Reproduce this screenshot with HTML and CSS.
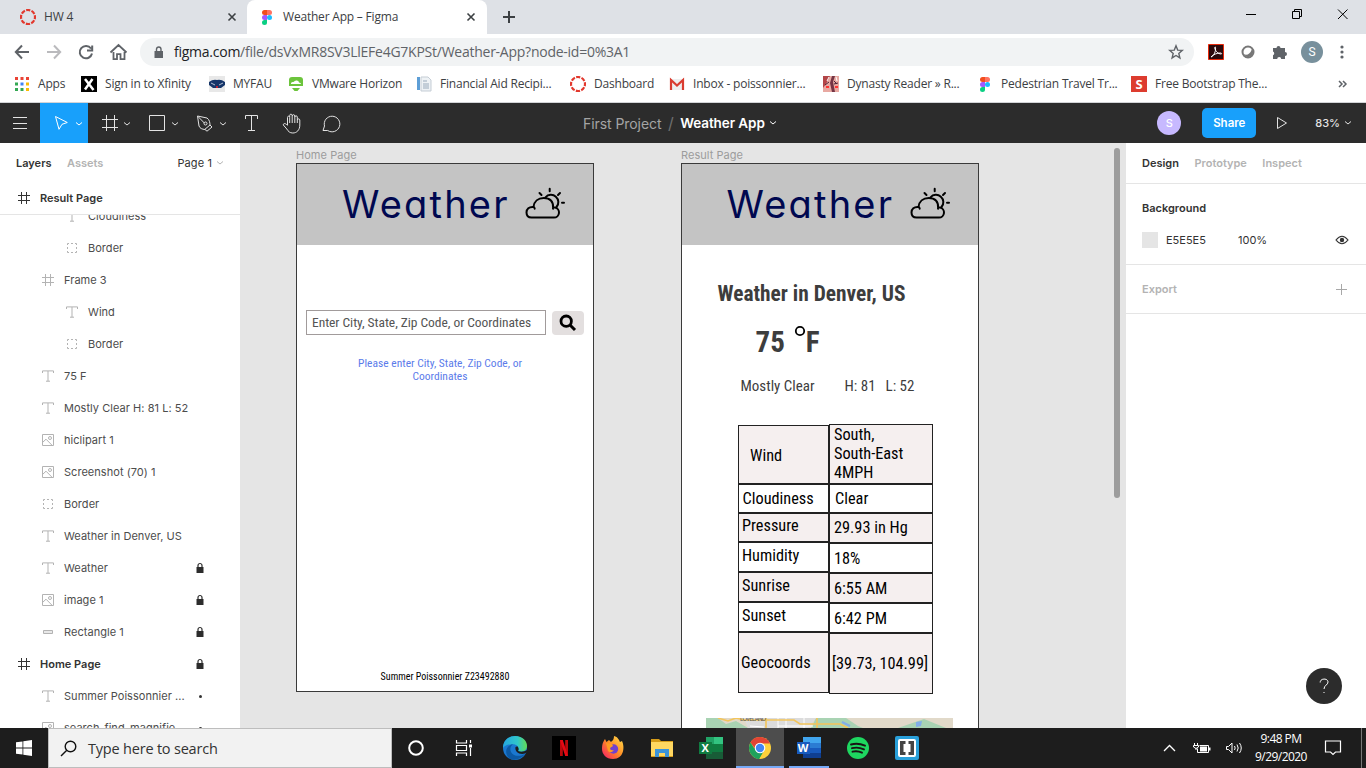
FILE: index.html
```html
<!DOCTYPE html>
<html lang="en">
<head>
<meta charset="utf-8">
<title>Weather App – Figma</title>
<link rel="stylesheet" href="styles.css">
</head>
<body>
<svg class="defs" width="0" height="0">
  <symbol id="i-text" viewBox="0 0 12 12"><path d="M.5 3V.9h11V3M6 1v10.2M4 11.2h4" fill="none" stroke="currentColor"/></symbol>
  <symbol id="i-frame" viewBox="0 0 12 12"><path d="M3.5 0v12M8.5 0v12M0 3.5h12M0 8.5h12" fill="none" stroke="currentColor"/></symbol>
  <symbol id="i-group" viewBox="0 0 12 12"><path d="M1.500 3V1.500H3M5 1.500h2M9 1.500h1.500V3M10.500 5v2M10.500 9v1.500H9M7 10.500H5M3 10.500H1.500V9M1.500 7V5" fill="none" stroke="currentColor"/></symbol>
  <symbol id="i-image" viewBox="0 0 12 12"><path d="M.5.5h11v11H.5zM.5 8.5L4 5.200l6 6" fill="none" stroke="currentColor"/><circle cx="8" cy="4" r="1.500" fill="none" stroke="currentColor"/></symbol>
  <symbol id="i-rect" viewBox="0 0 12 12"><path d="M1.500 4.500h9v3h-9z" fill="#e8e8e8" stroke="currentColor"/></symbol>
  <symbol id="i-lock" viewBox="0 0 8 12"><path d="M.5 5h7v6h-7z" fill="#2c2c2c"/><path d="M2 5.500V3.500a2 2 0 0 1 4 0v2" fill="none" stroke="#2c2c2c" stroke-width="1.200"/></symbol>
  <symbol id="i-figma" viewBox="0 0 10 15"><path d="M2.500 0H5v5H2.500a2.500 2.500 0 0 1 0-5z" fill="#f24e1e"/><path d="M5 0h2.500a2.500 2.500 0 0 1 0 5H5z" fill="#ff7262"/><path d="M2.500 5H5v5H2.500a2.500 2.500 0 0 1 0-5z" fill="#a259ff"/><circle cx="7.500" cy="7.500" r="2.500" fill="#1abcfe"/><path d="M2.500 10H5v2.500A2.500 2.500 0 1 1 2.500 10z" fill="#0acf83"/></symbol>
  <symbol id="i-canvas" viewBox="0 0 16 16"><circle cx="8" cy="8" r="7" fill="none" stroke="#e2382d" stroke-width="2.200" stroke-dasharray="4.200 1.298" stroke-dashoffset="2.100"/></symbol>
  <symbol id="i-x" viewBox="0 0 10 10"><path d="M1.500 1.500l7 7M8.500 1.500l-7 7" stroke="#3c4043" stroke-width="1.600"/></symbol>
  <symbol id="i-sun" viewBox="0 0 40 32"><g fill="none" stroke="#000" stroke-width="2" stroke-linecap="round"><path d="M6.500 30.500H29a5 5 0 0 0 1-9.900c-.7-.2-1.300-.1-1.900.1C28.500 14.500 25 11 18.800 11 13 11 9 14.500 8.500 20 4 19.500 1.500 22 1.500 25.500c0 3 2 5 5 5zM8.500 20q1 .3 1.200 1.700M28.100 19.500v2.200"/><path d="M20.500 10.300a6.900 6.900 0 1 1 11 9.700M24.700 1.800v2.400M35 6l-2 2M14.500 6l2 2M37 15.700h2"/></g></symbol>
</svg>

<div class="tabs">
  <div class="tab"><svg class="fav" width="16" height="16"><use href="#i-canvas"/></svg><span class="ui">HW 4</span><svg class="close" width="10" height="10"><use href="#i-x"/></svg></div>
  <div class="tab active"><svg class="fav" width="16" height="15"><use href="#i-figma"/></svg><span class="ui">Weather App – Figma</span><svg class="close" width="10" height="10"><use href="#i-x"/></svg></div>
  <svg class="plus" width="12" height="12"><path d="M6 0v12M0 6h12" stroke="#3c4043" stroke-width="2"/></svg>
  <svg class="winctl" width="126" height="20" fill="none" stroke="#000"><path d="M6 10.500h10M52.500 7.500h7v7h-7zM54.500 7.500v-2h7v7h-2M98 5.500l9.500 9.500M107.500 5.500L98 15"/></svg>
</div>

<div class="nav">
  <svg width="140" height="38" fill="none" stroke="#5f6368" stroke-width="2">
    <path d="M29 18H16.500M22 11.500L15.800 18l6.200 6.500"/>
    <path d="M47 18h12.500M54 11.500l6.200 6.500-6.200 6.500" stroke="#bababd"/>
    <path d="M91 14.500A6.200 6.200 0 1 0 92 19.500M92.200 11.500v5h-5.200"/>
    <path d="M113.500 18v7.200h3.500v-5h3.500v5h4V18M110.500 18.500l8-7.500 8 7.500" stroke-width="1.800"/>
  </svg>
  <div class="omni"><svg width="10" height="13"><path d="M.5 5h8.500v7H.5z" fill="#5f6368"/><path d="M2.500 5.500V3.200a2.200 2.200 0 0 1 4.500 0v2.300" fill="none" stroke="#5f6368" stroke-width="1.400"/></svg><span class="url"><b>figma.com</b>/file/dsVxMR8SV3LlEFe4G7KPSt/Weather-App?node-id=0%3A1</span>
    <svg class="star" width="16" height="16" fill="none" stroke="#5f6368" stroke-width="1.400"><path d="M8 1.800l1.700 4.300 4.600.3-3.500 3 1.100 4.500L8 11.500l-3.900 2.400 1.100-4.500-3.500-3 4.600-.3z"/></svg></div>
  <div class="ext">
    <svg width="16" height="16"><path d="M.5.5h15v15H.5z" fill="#2b0a0c" stroke="#e8290b"/><path d="M3 13c3-1 5-6 4.500-9.500 0-1-.9-.6-.7.500C7.200 7 10 10 13.200 10c.9-.3.300-1-.7-1C9 9 5 10.500 3 13z" fill="none" stroke="#fff"/></svg>
    <svg width="14" height="14"><circle cx="7" cy="7" r="5.500" fill="#fff" stroke="#777" stroke-width="2"/><path d="M2 9Q8 12 11 4l1.500 3-2 4-4 1.500z" fill="#777"/></svg>
    <svg width="16" height="16"><path d="M1 4h3.500a2 2 0 1 1 4 0H13v4a2 2 0 1 1 0 4v3H9.200a2 2 0 0 0-4 0H1v-3.800a2 2 0 0 0 0-3.700z" fill="#5f6368"/></svg>
    <span class="me">S</span>
    <svg width="4" height="14" fill="#5f6368"><circle cx="2" cy="2" r="1.600"/><circle cx="2" cy="7" r="1.600"/><circle cx="2" cy="12" r="1.600"/></svg>
  </div>
</div>

<div class="marks">
  <a><svg width="16" height="16"><g fill="#ea4335"><path d="M1 1h3v3H1zM6.500 1h3v3h-3zM12 1h3v3h-3z"/></g><path d="M1 6.500h3v3H1zM1 12h3v3H1z" fill="#34a853"/><path d="M6.500 6.500h3v3h-3z" fill="#4285f4"/><path d="M6.500 12h3v3h-3z" fill="#34a853"/><path d="M12 6.500h3v3h-3zM12 12h3v3h-3z" fill="#fbbc05"/></svg><span class="ui">Apps</span></a>
  <a><svg width="16" height="16"><path d="M0 0h16v16H0z"/><path d="M4 3l8.500 11M11.500 3L4 13.500" stroke="#fff" stroke-width="2.500"/></svg><span class="ui">Sign in to Xfinity</span></a>
  <a><svg width="16" height="16"><path d="M0 0h16v16H0z" fill="#e8e8e8"/><path d="M0 6q4-3 8-2 4-1 8 2v3l-4 3H4L0 9z" fill="#153569"/><path d="M2 7l4 2M14 7l-4 2" stroke="#b4bfd3"/><path d="M7 10h2v2H7z" fill="#b23"/></svg><span class="ui">MYFAU</span></a>
  <a><svg width="16" height="16"><path d="M4 1h8a3 3 0 0 1 3 3v6H1V4a3 3 0 0 1 3-3z" fill="#6cc43c"/><path d="M3 8V7q1-1.500 2.500-1Q7 4 9 4.500q2 .5 2 2 2 0 2 1.500z" fill="#fff"/><path d="M4 12h8l-2.500 3h-3z" fill="#6cc43c"/></svg><span class="ui">VMware Horizon</span></a>
  <a><svg width="16" height="16"><path d="M1 1h3v13H1z" fill="#5d9ed6"/><path d="M5 1h7l3 3v11H5z" fill="#eef2f5" stroke="#c5cdd5"/><path d="M7 5h4M7 8h6M7 10h6M7 12h6" stroke="#9ab"/></svg><span class="ui">Financial Aid Recipi...</span></a>
  <a><svg width="16" height="16"><use href="#i-canvas"/></svg><span class="ui">Dashboard</span></a>
  <a><svg width="16" height="16"><path d="M1 3h14v11H1z" fill="#eee"/><path d="M2 14V4l6 5.500L14 4v10" fill="none" stroke="#d93c30" stroke-width="2.200"/></svg><span class="ui">Inbox - poissonnier...</span></a>
  <a><svg width="16" height="16"><path d="M0 0h16v16H0z" fill="#e8a9a2"/><path d="M0 0h7L3 8l-3 4z" fill="#b34548"/><path d="M9 0h3l-2 6 2 10H9L7 7z" fill="#743444"/><path d="M2 9l4-3M11 5l3 3M11 8l4-1" stroke="#4b2337"/><path d="M3 11h3M12 11h3" stroke="#f33" stroke-width="2"/><path d="M6 1l-2 4M13 1l1 4" stroke="#fff"/></svg><span class="ui">Dynasty Reader » R...</span></a>
  <a><svg width="10" height="15"><use href="#i-figma"/></svg><span class="ui wide">Pedestrian Travel Tr...</span></a>
  <a><span class="sg">S</span><span class="ui">Free Bootstrap The...</span></a>
  <svg class="more" width="10" height="8" fill="none" stroke="#5f6368" stroke-width="1.500"><path d="M1 1l3 3-3 3M5 1l3 3-3 3"/></svg>
</div>

<div class="bar">
  <svg width="352" height="40" fill="none" stroke="#e3e3e3">
    <path d="M13 14.500h14M13 20.500h14M13 25.500h14"/>
    <path d="M40 0h48v40H40z" fill="#18a0fb" stroke="none"/>
    <path d="M55.500 13.500l11.800 6-5.300 1.800-3 5z" stroke="#fff"/>
    <path d="M76 19.500l3 2.500 3-2.500" stroke="#fff"/>
    <path d="M106.500 12v16M114.500 12v16M102 16.500h16M102 24.500h16M124 19.500l3 2.500 3-2.500"/>
    <path d="M149.500 12.500h15v15h-15zM172 19.500l3 2.500 3-2.500"/>
    <path d="M197.500 13l9.500 2c2.500 1.500 3 5 3 7l2 2-5 4.200-2-1.700c-3-.3-5-1-6-3.500zM198 13.500l6.500 6.700M205 26.200l5-4.200"/><circle cx="205.500" cy="20.500" r="1.500"/><path d="M220 19.500l3 2.500 3-2.500"/>
    <path d="M245.500 16v-3.500h12V16M251.500 13v14.500M248 27.500h7"/>
    <path d="M287.500 22v-7.500c0-1.800 2.200-1.800 2.200 0V20M289.700 14v-1.500c0-1.800 2.500-1.800 2.500 0V20M292.200 13c0-1.800 2.600-1.800 2.600 0v7M294.800 14c0-1.600 2.500-1.600 2.500 0v6M297.300 17c0-1.500 2.500-1.500 2.500 0v5c0 5-3 8-7 8-3 0-4.500-1.500-6-4l-3.500-4c0-2.200 2.500-1.800 4.200.5"/>
    <path d="M323 27.500l1.500-4.500a7.800 7.800 0 1 1 3.200 4.500z"/>
  </svg>
  <div class="crumb"><span>First Project</span><i>/</i><b>Weather App</b><svg width="8" height="6" fill="none" stroke="#fff"><path d="M1 1.500l3 2.500 3-2.500"/></svg></div>
  <div class="right"><span class="av">S</span><span class="share">Share</span><svg width="12" height="14" fill="none" stroke="#e3e3e3"><path d="M1.500 1.500l9 5.500-9 5.500z"/></svg><span class="pct">83%</span><svg width="8" height="6" fill="none" stroke="#e3e3e3"><path d="M1 1.500l3 2.500 3-2.500"/></svg></div>
</div>

<main>
  <aside class="layers">
    <div class="lt"><b>Layers</b><b class="dim">Assets</b><span class="pg">Page 1</span><svg width="8" height="6" fill="none" stroke="#b3b3b3"><path d="M1 1.500l3 2.500 3-2.500"/></svg></div>
    <div class="row top pin"><svg width="12" height="12"><use href="#i-frame"/></svg><span>Result Page</span></div>
    <div class="list">
      <div class="row l2"><svg width="12" height="12"><use href="#i-text"/></svg><span>Cloudiness</span></div>
      <div class="row l2"><svg width="12" height="12"><use href="#i-group"/></svg><span>Border</span></div>
      <div class="row"><svg width="12" height="12"><use href="#i-frame"/></svg><span>Frame 3</span></div>
      <div class="row l2"><svg width="12" height="12"><use href="#i-text"/></svg><span>Wind</span></div>
      <div class="row l2"><svg width="12" height="12"><use href="#i-group"/></svg><span>Border</span></div>
      <div class="row"><svg width="12" height="12"><use href="#i-text"/></svg><span>75 F</span></div>
      <div class="row"><svg width="12" height="12"><use href="#i-text"/></svg><span>Mostly Clear H: 81 L: 52</span></div>
      <div class="row"><svg width="12" height="12"><use href="#i-image"/></svg><span>hiclipart 1</span></div>
      <div class="row"><svg width="12" height="12"><use href="#i-image"/></svg><span>Screenshot (70) 1</span></div>
      <div class="row"><svg width="12" height="12"><use href="#i-group"/></svg><span>Border</span></div>
      <div class="row"><svg width="12" height="12"><use href="#i-text"/></svg><span>Weather in Denver, US</span></div>
      <div class="row"><svg width="12" height="12"><use href="#i-text"/></svg><span>Weather</span><svg class="lock" width="8" height="12"><use href="#i-lock"/></svg></div>
      <div class="row"><svg width="12" height="12"><use href="#i-image"/></svg><span>image 1</span><svg class="lock" width="8" height="12"><use href="#i-lock"/></svg></div>
      <div class="row"><svg width="12" height="12"><use href="#i-rect"/></svg><span>Rectangle 1</span><svg class="lock" width="8" height="12"><use href="#i-lock"/></svg></div>
      <div class="row top"><svg width="12" height="12"><use href="#i-frame"/></svg><span>Home Page</span><svg class="lock" width="8" height="12"><use href="#i-lock"/></svg></div>
      <div class="row"><svg width="12" height="12"><use href="#i-text"/></svg><span>Summer Poissonnier ...</span><em class="dot"></em></div>
      <div class="row"><svg width="12" height="12"><use href="#i-image"/></svg><span>search_find_magnifie...</span><em class="dot"></em></div>
    </div>
  </aside>

  <section class="canvas">
    <div class="name n1">Home Page</div>
    <div class="board b1">
      <div class="hero"><span>Weather</span><svg width="40" height="32"><use href="#i-sun"/></svg></div>
      <div class="find"><div class="field">Enter City, State, Zip Code, or Coordinates</div><div class="go"><svg width="18" height="18" fill="none" stroke="#000"><circle cx="7.200" cy="7.200" r="5.200" stroke-width="2.800"/><path d="M11 11l5 5" stroke-width="3"/></svg></div></div>
      <div class="hint">Please enter City, State, Zip Code, or<br>Coordinates</div>
      <div class="foot">Summer Poissonnier Z23492880</div>
    </div>
    <div class="name n2">Result Page</div>
    <div class="board b2">
      <div class="hero"><span>Weather</span><svg width="40" height="32"><use href="#i-sun"/></svg></div>
      <div class="place">Weather in Denver, US</div>
      <div class="temp"><span>75</span><svg width="12" height="12"><circle cx="6" cy="6" r="4.200" fill="none" stroke="#000" stroke-width="1.800"/></svg><span>F</span></div>
      <div class="sky"><span>Mostly Clear</span><span>H: 81</span><span>L: 52</span></div>
      <div class="grid">
        <div class="col a"><p class="h1 s">Wind</p><p class="h2">Cloudiness</p><p class="h3 s">Pressure</p><p class="h4">Humidity</p><p class="h5 s">Sunrise</p><p class="h6">Sunset</p><p class="h7 s">Geocoords</p></div>
        <div class="col z"><p class="h1 s">South,<br>South-East<br>4MPH</p><p class="h2">Clear</p><p class="h3 s">29.93 in Hg</p><p class="h4">18%</p><p class="h5 s">6:55 AM</p><p class="h6">6:42 PM</p><p class="h7 s">[39.73, 104.99]</p></div>
      </div>
      <svg class="map" width="247" height="20" fill="none"><path d="M0 0h247v20H0z" fill="#e1d9c9"/><path d="M0 0h12l8 6 10-3 12 7H0zM128 0h12l12 8 30 12h-60zM105 10l5-10h18v10z" fill="#a9d3b3"/><path d="M38 0h72l-8 10H42z" fill="#dcdcdc"/><path d="M192 10l26-9 22 9z" fill="#a9d3b3"/><path d="M210 4l6-1-1 5-5 1z" fill="#82ade9"/><path d="M136 4l8 4" stroke="#82ade9" stroke-width="2"/><path d="M44 8l14 1M72 0v10M80 0v10M98 0v10M72 8h35" stroke="#fff"/><path d="M12 0l10 3 8-3 8 2h50l6 4h40l8 4M60 0v10M111 0v10" stroke="#f3c55b" stroke-width="1.600"/><text x="34" y="2.500" font-size="6" font-family="Inter, sans-serif" fill="#555" textLength="26">LOVELAND</text></svg>
    </div>
    <div class="thumb"></div>
  </section>

  <aside class="props">
    <div class="pt"><b>Design</b><b class="dim">Prototype</b><b class="dim">Inspect</b></div>
    <div class="bgp"><b>Background</b><div class="bgr"><i></i><span class="hex">E5E5E5</span><span>100%</span><svg width="14" height="10"><path d="M1 5Q7-2.500 13 5 7 12.500 1 5z" fill="none" stroke="#333" stroke-width="1.200"/><circle cx="7" cy="5" r="2.200" fill="#333"/></svg></div></div>
    <div class="exp"><b class="dim">Export</b><svg width="11" height="11"><path d="M5.500 0v11M0 5.500h11" stroke="#a8a8a8"/></svg></div>
    <div class="help"><svg width="10" height="16" fill="none" stroke="#fff"><path d="M1.200 4.500C1 0 9 0 9 4c0 3-4 3.200-4 7"/><path d="M4.500 14.500h1"/></svg></div>
  </aside>
</main>

<footer>
  <div class="start"><svg width="16" height="16" fill="#fff"><path d="M0 2.300L6.500 1.400v6.200H0zM7.300 1.300L16 0v7.600H7.300zM0 8.400h6.500v6.200L0 13.700zM7.300 8.400H16V16l-8.700-1.300z"/></svg></div>
  <div class="search"><svg width="17" height="17" fill="none" stroke="#111" stroke-width="1.400"><circle cx="10.500" cy="6.500" r="5.300"/><path d="M6.800 10.200L1 16"/></svg><span>Type here to search</span></div>
  <div class="apps">
    <span><svg width="24" height="24"><circle cx="12" cy="12" r="6.800" fill="none" stroke="#fff" stroke-width="2"/></svg></span>
    <span><svg width="24" height="24" fill="none" stroke="#fff" stroke-width="1.200"><path d="M4.500 4v3h10V4M4.500 20v-3h10v3M4.500 9.500h10v5h-10zM18.500 4v3M18.500 12v8"/><path d="M17 8.500h3v3h-3z" fill="#fff" stroke="none"/></svg></span>
    <span><svg width="24" height="24"><defs><linearGradient id="eg" x1="0" x2="1"><stop offset="0" stop-color="#25a6df"/><stop offset=".6" stop-color="#30c6ca"/><stop offset="1" stop-color="#62dc55"/></linearGradient></defs><circle cx="12" cy="12" r="12" fill="#1b78d0"/><path d="M0 12C0 4 6 0 12 0c8 0 12 5.500 12 10 0 5-5 6.500-9 5.200 2-3-.5-7-5-7C5 8 1 10 0 12z" fill="url(#eg)"/><path d="M10 8c-7 6 1 16 12 10-5 7-14 7-17 3s-3-11 5-13z" fill="#0c59a4"/><path d="M12.500 11c-1 5 4 8 9.500 6.500l2-1.500v-2c-3 2-6 2-9 1 1-1 .8-3.500-.7-4.800z" fill="#1d1d1d"/></svg></span>
    <span><svg width="24" height="24"><path d="M0 0h24v24H0z"/><path d="M8 4h2.800v16H8zM13.200 4H16v16h-2.800z" fill="#b9090b"/><path d="M8 4h2.800L16 20h-2.800z" fill="#e50914"/></svg></span>
    <span><svg width="24" height="24"><defs><linearGradient id="ff" x1="1" y1="0" x2="0" y2="1"><stop offset="0" stop-color="#ffe44d"/><stop offset=".5" stop-color="#ff8a25"/><stop offset="1" stop-color="#f5156c"/></linearGradient></defs><path d="M1 13C1 8 2 6 4 3l1.500 3L8 4l2 2c1-1 3-2 3-6 4 1 5 4 6 6l2-1c3 6 2 18-9 18C5 23 1 18 1 13z" fill="url(#ff)"/><circle cx="12.500" cy="13" r="4.700" fill="#7141cf"/><path d="M5 7l6 1 1 2-3 2q0 3 4 2-3 4-6 1z" fill="#ff9d22"/></svg></span>
    <span><svg width="24" height="24"><path d="M1 3h8l2 2h12v16H1z" fill="#d69c19"/><path d="M1 6h22v14H1z" fill="#ffd761"/><path d="M5 21v-8h14v8h-4v-4H9v4z" fill="#3b94d9"/></svg></span>
    <span><svg width="24" height="24"><path d="M7 1h8v7H7z" fill="#21a366"/><path d="M15 1h9v7h-9z" fill="#33c481"/><path d="M7 8h17v8H7z" fill="#107c41"/><path d="M7 16h17v7H7z" fill="#185c37"/><path d="M0 6h13v12H0z" fill="#107c41"/><text x="2.500" y="16" font-family="Open Sans, sans-serif" font-weight="700" font-size="11" fill="#fff">X</text></svg></span>
    <span class="on"><svg width="24" height="24"><circle cx="12" cy="12" r="11" fill="#fdd03b"/><path d="M12 12H2.500A11 11 0 0 0 11 23l5.500-9z" fill="#1fa15c"/><path d="M2.500 6.500a11 11 0 0 1 19.500 1H12L8 14z" fill="#e24435"/><path d="M2.500 6.500A11 11 0 0 0 11 23l3-6-6-2z" fill="#1fa15c"/><circle cx="12" cy="12" r="5.300" fill="#fff"/><circle cx="12" cy="12" r="4.200" fill="#4285f4"/></svg></span>
    <span class="open"><svg width="24" height="24"><path d="M6 1h18v6H6z" fill="#41a5ee"/><path d="M6 7h18v5H6z" fill="#2b7cd3"/><path d="M6 12h18v5H6z" fill="#185abd"/><path d="M6 17h18v5H6z" fill="#103f91"/><path d="M0 6h13v12H0z" fill="#185abd"/><text x=".8" y="16" font-family="Open Sans, sans-serif" font-weight="700" font-size="11" fill="#fff">W</text></svg></span>
    <span><svg width="24" height="24"><circle cx="12" cy="12" r="11" fill="#1ed760"/><path d="M5 8.500q7-2 14 1.200M6 12.200q6-1.600 12 1.200M6.500 15.700q5-1.200 9.500 1" fill="none" stroke="#191414" stroke-width="1.900" stroke-linecap="round"/></svg></span>
    <span><svg width="24" height="24"><rect width="24" height="24" rx="2" fill="#29a0da"/><rect x="3" y="3" width="18" height="18" rx="2" fill="#fff"/><path d="M10.500 5H5v14h5.500v-3H8.500V8h2zM13.500 5H19v14h-5.500v-3h2V8h-2z" fill="#444"/></svg></span>
  </div>
  <div class="tray">
    <svg width="86" height="24" fill="none" stroke="#fff"><path d="M1 15l5.500-5.500L12 15" stroke-width="1.300"/><path d="M36.500 9.500h9v7h-11v-4"/><path d="M37 10.500h7v5h-7zM46 11.500h1.500v3H46z" fill="#fff" stroke="none"/><path d="M31.500 7v2M34.500 7v2M30.500 9.500h5v1.500q-2.500 3-5 0zM33 12v2"/><path d="M63.500 10.500h2l3.500-3.500v10l-3.500-3.500h-2zM71.500 10q1.300 2 0 4M74 8.500q2.400 3.500 0 7M76.500 7q3.500 5 0 10"/></svg>
    <div class="clock"><span>9:48 PM</span><span>9/29/2020</span></div>
    <svg class="note" width="18" height="18" fill="none" stroke="#fff" stroke-width="1.200"><path d="M1.500 2h15v11h-5L9 15.500 6.500 13h-5z"/></svg>
    <i class="edge"></i>
  </div>
</footer>
</body>
</html>
```
FILE: styles.css
```css
* { box-sizing: border-box; }
body { margin: 0; width: 1366px; height: 768px; overflow: hidden; display: flex; flex-direction: column; background: #fff; font-family: Inter, "Liberation Sans", sans-serif; font-size: 11px; color: #333; }
svg { display: block; flex: none; }
.defs { position: absolute; }
b { font-weight: 600; }
.ui { font: 12px/16px "Open Sans", "Noto Sans", sans-serif; letter-spacing: -.2px; color: #3c4043; white-space: nowrap; }

.tabs { height: 34px; flex: none; background: #dee1e6; display: flex; align-items: center; position: relative; }
.tab { width: 247px; height: 34px; display: flex; align-items: center; padding: 0 10px 0 20px; gap: 8px; }
.tab .close { margin-left: auto; }
.tab.active { width: 240px; padding-left: 12px; gap: 8px; padding-right: 11px; background: #fff; border-radius: 8px 8px 0 0; }
.plus { margin-left: 16px; }
.winctl { margin-left: auto; margin-bottom: 6px; }

.nav { height: 38px; flex: none; display: flex; align-items: flex-start; }
.omni { margin-top: 4px; width: 1054px; height: 28px; border-radius: 14px; background: #f1f3f4; display: flex; align-items: center; padding: 0 10px 0 14px; gap: 10px; }
.url { font: 14px/20px "Open Sans", "Noto Sans", sans-serif; letter-spacing: -.25px; color: #5f6368; white-space: nowrap; }
.url b { font-weight: 400; color: #202124; }
.star { margin-left: auto; }
.ext { display: flex; align-items: center; height: 36px; margin-left: 14px; gap: 17px; }
.me { width: 22px; height: 22px; border-radius: 50%; background: #78909c; color: #fff; font: 12px/22px Roboto, sans-serif; text-align: center; margin-left: -4px; }

.marks { height: 31px; flex: none; border-bottom: 1px solid #d2d4d7; padding: 0 0 6px 14px; display: grid; grid-template-columns: 67px 128px 79px 128px 154px 99px 154px 157px 151px 207px 20px; align-items: center; }
.marks a { display: flex; align-items: center; gap: 8px; }
.sg { width: 16px; height: 16px; background: #dd3c2f; color: #fff; font: 700 13px/16px "Open Sans", sans-serif; text-align: center; }
.wide { margin-left: 3px; }

.bar { height: 40px; flex: none; background: #2c2c2c; display: flex; color: #fff; }
.crumb { display: flex; align-items: center; margin-left: 231px; font-size: 14px; letter-spacing: -.07px; white-space: nowrap; }
.crumb span { color: #a4a4a4; }
.crumb i { font-style: normal; color: #6f6f6f; margin: 0 6.500px; font-size: 16px; }
.crumb b { font-size: 13.500px; }
.crumb svg { margin-left: 4px; }
.right { display: flex; align-items: center; margin-left: auto; padding-right: 14px; }
.av { width: 24px; height: 24px; border-radius: 50%; background: #c7b9ff; font: 500 11px/24px Inter; text-align: center; margin-right: 21px; }
.share { width: 54px; height: 30px; border-radius: 5px; background: #18a0fb; font-weight: 600; font-size: 11.500px; line-height: 30px; text-align: center; margin-right: 20px; }
.pct { margin-left: 27px; margin-right: 4px; font-size: 11px; font-weight: 500; color: #e3e3e3; }

main { flex: 1; min-height: 0; display: flex; }
.layers { width: 240px; background: #fff; display: flex; flex-direction: column; }
.dim { color: #b3b3b3; }
.lt { height: 39px; flex: none; display: flex; align-items: center; padding: 2px 16px; gap: 15.500px; }
.lt .pg { margin-left: auto; margin-right: -11.500px; letter-spacing: .1px; }
.row { height: 32px; flex: none; display: flex; align-items: center; padding-left: 42px; gap: 10px; color: #b3b3b3; }
.row span { color: #4c4c4c; letter-spacing: .04px; white-space: nowrap; }
.row.l2 { padding-left: 66px; }
.row.top { padding-left: 18px; color: #333; }
.row.top span { font-weight: 600; color: #333; letter-spacing: 0; }
.row.pin { height: 33px; border-bottom: 1px solid #e5e5e5; }
.lock { margin-left: auto; margin-right: 36px; }
.dot { width: 3px; height: 3px; border-radius: 50%; background: #333; margin-left: auto; margin-right: 38px; }
.list { flex: 1; min-height: 0; overflow: hidden; display: flex; flex-direction: column; }
.list .row:first-child { margin-top: -15px; }

.canvas { width: 886px; background: #e5e5e5; position: relative; overflow: hidden; }
.name { position: absolute; top: 5px; color: #9c9c9c; line-height: 14px; letter-spacing: .05px; }
.n1 { left: 56px; }
.n2 { left: 441px; }
.board { position: absolute; top: 20px; width: 298px; background: #fff; border: 1px solid #3a3a3a; font-family: Roboto, sans-serif; font-stretch: 75%; }
.b1 { left: 56px; height: 529px; }
.b2 { left: 440.500px; height: 700px; }
.hero { height: 81px; background: #c4c4c4; display: flex; align-items: center; padding-left: 45px; }
.hero span { width: 183px; font: 400 38px/79px Inter, sans-serif; font-feature-settings: "cv11"; letter-spacing: 2.200px; color: #000850; }
.hero svg { margin-top: -4px; }
.find { display: flex; margin: 65px 9px 0; justify-content: space-between; }
.field { width: 240px; height: 25px; border: 1px solid #a19b9b; padding-left: 5px; font-size: 13.500px; line-height: 22px; letter-spacing: -.05px; color: #555; white-space: nowrap; }
.go { width: 32px; height: 24px; border-radius: 4px; background: #e3dfdf; margin-top: 1px; padding: 3px 0 0 7px; }
.hint { margin-top: 22px; padding-right: 10px; text-align: center; font-size: 11.500px; line-height: 13px; color: #5b7bea; }
.foot { margin-top: 288px; text-align: center; font-size: 10px; line-height: 12px; color: #000; }
.place { margin: 36px 0 0 36px; font-size: 21.400px; line-height: 26px; font-weight: 700; color: #3d3d3d; }
.temp { display: flex; margin: 17px 0 0 74px; font-size: 29px; line-height: 36px; font-weight: 700; color: #3d3d3d; }
.temp svg { margin: 1px 0 0 9px; }
.sky { display: flex; margin-top: 16px; padding-left: 59px; font-size: 15px; line-height: 20px; color: #3d3d3d; }
.sky span:nth-child(1) { width: 104px; }
.sky span:nth-child(2) { width: 41px; }
.grid { display: flex; margin: 28px 0 0 56.500px; width: 195px; color: #000; font-size: 16.300px; }
.col { display: flex; flex-direction: column; width: 91px; padding-top: 1px; }
.col.z { width: 104px; padding-top: 0; }
.col p { margin: 0; border: 1px solid #222; line-height: 19px; padding: 3px; height: 30px; white-space: nowrap; }
.col .s { background: #f5efef; }
.a .h1 { height: 59px; padding: 20px 11px; }
.z .h1 { height: 60px; padding: 0 4px; }
.col .h2 { height: 29px; padding: 3.500px; }
.z .h2 { padding: 4px 5px; }
.a .h3 { height: 29px; padding: 2px 3px; }
.z .h3 { height: 30px; padding: 4px 4px; }
.a .h5, .a .h6, .a .h4 { padding: 3px; }
.z .h4, .z .h5, .z .h6 { padding: 5px 4px; }
.col .h7 { height: 61px; padding: 20px 2px; }
.map { margin: 24px 0 0 24px; }
.thumb { position: absolute; right: 6px; top: 5px; width: 6px; height: 350px; border-radius: 3px; background: #9d9d9d; }

.props { width: 240px; background: #fff; position: relative; }
.pt { height: 41px; border-bottom: 1px solid #e5e5e5; display: flex; align-items: center; padding-left: 16px; gap: 15.500px; }
.bgp { height: 81px; border-bottom: 1px solid #e5e5e5; padding: 17px 16px 0; line-height: 14px; }
.bgr { display: flex; align-items: center; margin-top: 17px; }
.bgr i { width: 16px; height: 16px; background: #e5e5e5; margin-right: 8px; }
.bgr .hex { width: 72px; }
.bgr svg { margin-left: auto; margin-right: 1px; }
.exp { height: 49px; border-bottom: 1px solid #e5e5e5; display: flex; align-items: center; justify-content: space-between; padding: 0 19px 0 16px; }
.help { position: absolute; right: 24px; bottom: 24px; width: 36px; height: 36px; border-radius: 50%; background: #2c2c2c; display: flex; align-items: center; justify-content: center; }

footer { height: 40px; flex: none; background: #1d1d1d; display: flex; font-family: "Open Sans", "Noto Sans", sans-serif; }
.start { width: 48px; display: flex; align-items: center; justify-content: center; }
.search { width: 344px; background: #f2f2f2; border: 1px solid #bdbdbd; display: flex; align-items: center; padding-left: 11px; gap: 11px; font-size: 14.500px; letter-spacing: -.2px; color: #333; }
.apps { display: flex; gap: 1px; }
.apps span { width: 48px; height: 40px; display: flex; align-items: center; justify-content: center; }
.apps span:nth-child(2) { margin-left: -1px; margin-right: 2px; }
.apps .on { background: #4d4d4d; border-bottom: 2px solid #76a9f7; padding-top: 2px; }
.apps .open { width: 40px; margin: 0 4px; border-bottom: 2px solid #76a9f7; padding-top: 2px; }
.tray { margin-left: auto; display: flex; align-items: center; color: #fff; }
.clock { width: 66px; margin-left: -1px; display: flex; flex-direction: column; align-items: center; font-size: 12px; line-height: 18px; letter-spacing: -.55px; }
.note { margin: 0 19px 0 10px; }
.edge { width: 1px; height: 40px; background: #777; margin-right: 4px; }
```
